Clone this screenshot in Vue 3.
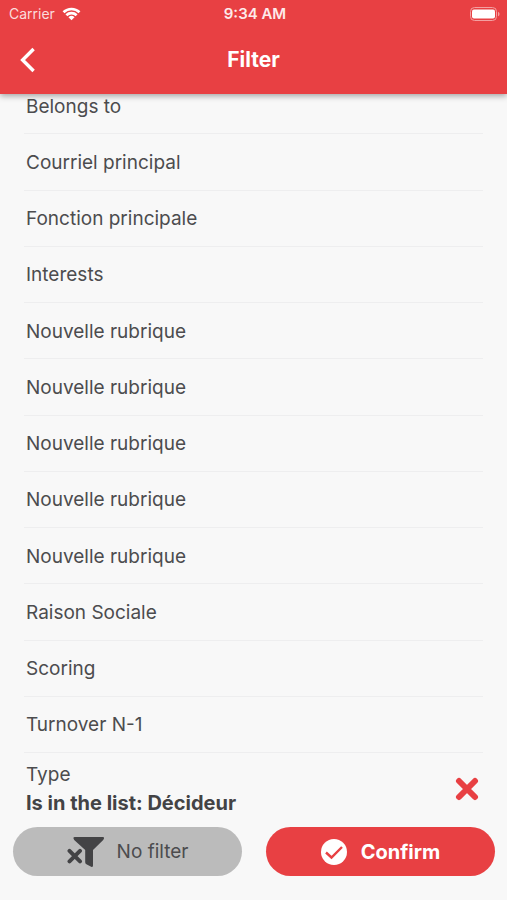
<script setup>
const fields = [
  'Belongs to',
  'Courriel principal',
  'Fonction principale',
  'Interests',
  'Nouvelle rubrique',
  'Nouvelle rubrique',
  'Nouvelle rubrique',
  'Nouvelle rubrique',
  'Nouvelle rubrique',
  'Raison Sociale',
  'Scoring',
  'Turnover N-1',
]
</script>

<template>
  <div class="screen">
    <header class="top">
      <div class="status">
        <div class="carrier">
          <span>Carrier</span>
          <svg class="wifi" viewBox="0 0 20 14" aria-hidden="true">
            <path d="M1.6 5.2a12 12 0 0 1 16.8 0" />
            <path d="M4.6 8.3a7.7 7.7 0 0 1 10.8 0" />
            <path class="solid" d="M10 13.6l-3.2-3.2a4.6 4.6 0 0 1 6.4 0z" />
          </svg>
        </div>
        <span class="time">9:34 AM</span>
        <div class="power">
          <svg class="battery" viewBox="0 0 32 16" aria-hidden="true">
            <rect class="shell" x="1.5" y="1.5" width="26" height="13" rx="4" />
            <rect class="charge" x="3" y="3.5" width="23" height="9" rx="2" />
            <path class="cap" d="M29 5.7c2 .8 2 3.800 0 4.600z" />
          </svg>
        </div>
      </div>
      <nav class="bar">
        <button class="back" type="button" aria-label="Back">
          <svg viewBox="0 0 16 26" aria-hidden="true"><path d="M13.600 2L2.600 13l11 11" /></svg>
        </button>
        <h1>Filter</h1>
      </nav>
    </header>

    <ul class="fields">
      <li v-for="(name, i) in fields" :key="i">
        <button class="field" type="button">{{ name }}</button>
      </li>
    </ul>

    <section class="active">
      <div class="rule">
        <span>Type</span>
        <strong>Is in the list: Décideur</strong>
      </div>
      <button class="clear" type="button" aria-label="Remove filter">
        <svg viewBox="0 0 24 24" aria-hidden="true"><path d="M4 4l16 16M20 4L4 20" /></svg>
      </button>
    </section>

    <footer class="actions">
      <button class="pill none" type="button">
        <svg class="funnel" viewBox="0 0 38 32" aria-hidden="true">
          <path d="M7.500 1h28.500q1.500 0 1 1.500l-.8 1.500L26 14v15.500q0 2-1.800 1.200l-4.800-2.500q-1.200-.7-1.200-2V14L7.200 4 6.500 2.500Q6 1 7.500 1z" />
          <path class="cross" d="M2.500 14.800l10.500 10.500M13 14.800L2.500 25.300" />
        </svg>
        <span>No filter</span>
      </button>
      <button class="pill confirm" type="button">
        <svg class="check" viewBox="0 0 26 26" aria-hidden="true">
          <circle cx="13" cy="13" r="13" />
          <path d="M5 13.500l5.500 5L21 8" />
        </svg>
        <span>Confirm</span>
      </button>
    </footer>
  </div>
</template>

<style>
body {
  background: #f8f8f8;
}
</style>

<style scoped>
.screen {
  display: flex;
  flex-direction: column;
  min-height: 100vh;
  overflow: hidden;
  background: #f8f8f8;
  color: #4c4c4e;
  font: 19px/24px Inter, "Liberation Sans", sans-serif;
}
button {
  border: 0;
  padding: 0;
  background: none;
  color: inherit;
  font: inherit;
  cursor: pointer;
}
svg {
  display: block;
  fill: none;
  stroke: currentColor;
}
.top {
  position: relative;
  z-index: 1;
  background: #e84043;
  color: #fff;
  box-shadow: 0 2px 6px rgba(0, 0, 0, 0.35);
}
.status {
  display: grid;
  grid-template-columns: 1fr auto 1fr;
  align-items: center;
  height: 28px;
  padding: 0 6px 0 9px;
  font-size: 14px;
  line-height: 28px;
}
.carrier {
  display: flex;
  align-items: center;
  gap: 7px;
  color: #fbdcdc;
}
.wifi {
  width: 19px;
  height: 14px;
  color: #fff;
  stroke-width: 2.8;
}
.wifi .solid {
  fill: currentColor;
  stroke: none;
}
.time {
  font-size: 15px;
  font-weight: 600;
  color: #fdeaea;
}
.power {
  display: flex;
  justify-content: flex-end;
}
.battery {
  width: 32px;
  height: 16px;
  stroke: none;
}
.shell {
  stroke: #f3a0a1;
}
.charge {
  fill: #fff;
}
.cap {
  fill: #f3a0a1;
}
.bar {
  display: grid;
  grid-template-columns: 1fr auto 1fr;
  align-items: center;
  height: 64px;
  padding: 0 20px 2px;
}
.back {
  justify-self: start;
}
.back svg {
  width: 16px;
  height: 26px;
  stroke-width: 3.4;
}
h1 {
  margin: 0;
  font-size: 21px;
  font-weight: 700;
}
.fields {
  display: flex;
  flex: 1;
  flex-direction: column;
  margin: -16px 24px 0;
  padding: 0;
  list-style: none;
}
.fields li {
  box-sizing: border-box;
  display: flex;
  flex: 1 0 56px;
  border-bottom: 1px solid #eeeeef;
}
.field {
  flex: 1;
  padding: 2px 2px 0;
  text-align: left;
}
.active {
  display: flex;
  align-items: center;
  justify-content: space-between;
  padding: 7px 28px 5px 26px;
}
.rule {
  display: flex;
  flex-direction: column;
  line-height: 29px;
}
.rule strong {
  color: #434345;
  font-size: 20px;
  font-weight: 700;
}
.clear {
  color: #e84043;
}
.clear svg {
  width: 24px;
  height: 24px;
  stroke-width: 6;
  stroke-linecap: round;
}
.actions {
  display: flex;
  gap: 24px;
  padding: 4px 12px 24px 13px;
}
.pill {
  display: flex;
  flex: 1;
  align-items: center;
  justify-content: center;
  height: 49px;
  border-radius: 25px;
}
.none {
  gap: 12px;
  background: #bbb;
}
.funnel {
  width: 38px;
  height: 32px;
  color: #434345;
  fill: currentColor;
  stroke: none;
}
.funnel .cross {
  stroke: currentColor;
  stroke-width: 4;
  stroke-linecap: round;
}
.confirm {
  gap: 14px;
  background: #e84043;
  color: #fff;
  font-size: 20px;
  font-weight: 700;
}
.check {
  width: 26px;
  height: 26px;
  stroke: none;
}
.check circle {
  fill: #fff;
}
.check path {
  stroke: #e84043;
  stroke-width: 2.4;
}
</style>
